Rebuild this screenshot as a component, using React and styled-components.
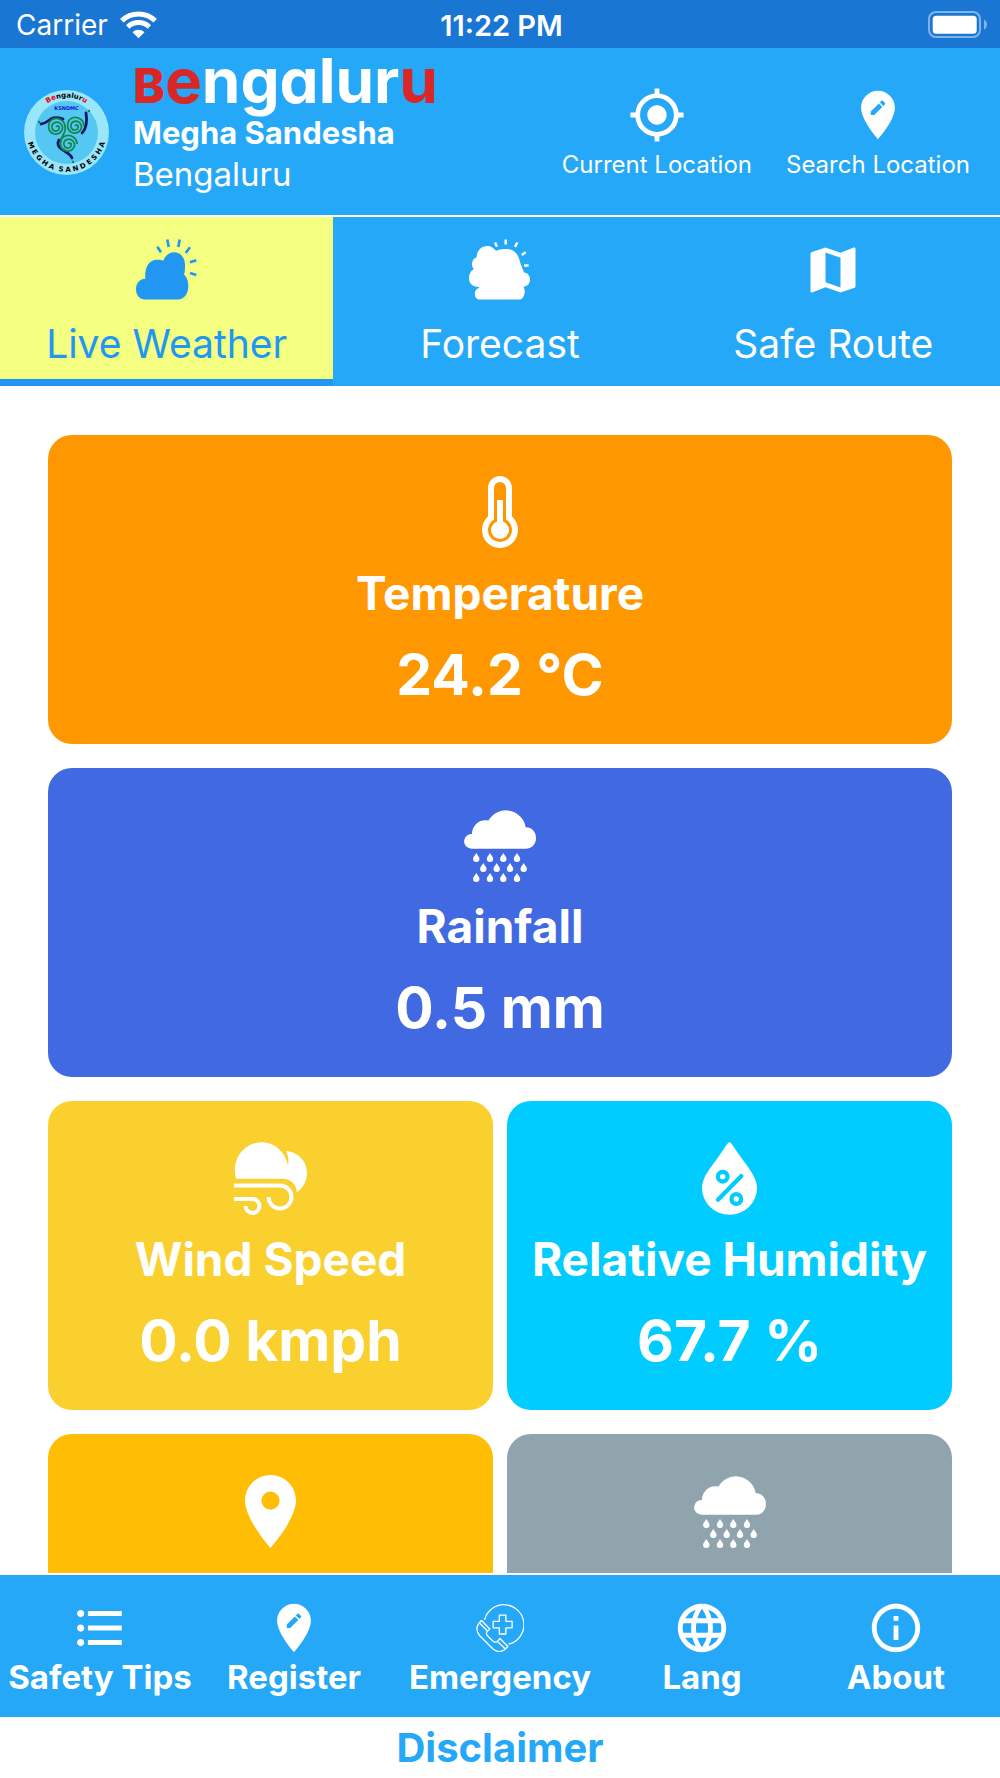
import React, { useState } from "react";
// styling
import styled, { createGlobalStyle } from "styled-components";
// icons
import {
  MdMyLocation,
  MdEditLocation,
  MdMap,
  MdFormatListBulleted,
  MdLanguage,
  MdInfoOutline,
} from "react-icons/md";

const LiveIcon = () => (
  <svg width="62" height="62" viewBox="0 0 62 62" fill="currentColor">
    <path d="M9 60.500C3.500 60.500 0 56 0 50S4 39.700 9.300 39.700C8.500 28 13 20.700 21 20.700C24 20.700 26 21 27.300 21.700C29.500 16.500 33 13.300 38 13.300C45 13.300 49 19 49 26C49 30 49 33 48 35.500C51 38.500 52.300 42 52.300 47C52.300 55 48 60.500 42 60.500Z" />
    <path
      d="M21.300 7.700L25 13.300M31.300 .5L32.700 8M43.700 .5L42.300 8M54 8.300L49.700 14M60.300 21.300L54 23.300M60.300 36L54 34"
      stroke="currentColor"
      strokeWidth="2.600"
    />
  </svg>
);

const ForecastIcon = () => (
  <svg width="62" height="62" viewBox="0 0 62 62" fill="currentColor">
    <path d="M9.500 60.500A5.500 6 0 0 1 10 49C10.500 48.500 10 48 9.500 48C3.500 48 0 44 0 39.500C0 35 2 31.500 5 30C2 28.500 2 20 7.500 18.500C8 11.500 12 7 18.500 7C22 7 25 9 27 12C29.500 10.500 33 10 37 10C45 10 49.500 15 51 23L55 33.500C59 34 61 37 61 40.500C61 45 58 47.500 54.500 47.500C57 52 55.500 59 51.500 60.500Z" />
    <path
      d="M26 3.500L28 7.700M36.700 .5V5.500M48.300 3.500L46 7.900M56.700 13.300L52.700 16M59.700 26.500H55"
      stroke="currentColor"
      strokeWidth="2.400"
    />
  </svg>
);

const TemperatureIcon = () => (
  <svg width="72" height="72" viewBox="0 0 72 72" fill="currentColor">
    <path
      fillRule="evenodd"
      d="M24 12a12 12 0 0 1 24 0v28.600A18 18 0 1 1 24 40.600zM30 12a6 6 0 0 1 12 0v31.600A12 12 0 1 1 30 43.600z"
    />
    <path d="M33 24h6v24h-6z" />
    <circle cx="36" cy="54" r="9" />
  </svg>
);

const drops = [
  [12.3, 44],
  [26, 44],
  [39.3, 44],
  [53, 44],
  [19.3, 54],
  [32.7, 54],
  [46, 54],
  [59.7, 54],
  [12.3, 64],
  [26, 64],
  [39.3, 64],
  [53, 64],
];

const RainIcon = () => (
  <svg width="72" height="73" viewBox="0 0 72 73" fill="currentColor">
    <path d="M7.500 39.700A7.500 7.500 0 0 1 0 32.300A7.500 7.500 0 0 1 8 25A13.500 13.500 0 0 1 24.500 11.500A20 20 0 0 1 61.700 18.300C68 18.300 72 23 72 29C72 35 68 39.700 62 39.700Z" />
    {drops.map(([x, y]) => (
      <path
        key={`${x}-${y}`}
        d={`M${x} ${y}c1 2.200 3.200 3.600 3.200 5.800a3.200 3.200 0 0 1-6.400 0c0-2.200 2.200-3.600 3.200-5.800z`}
      />
    ))}
  </svg>
);

const WindIcon = () => (
  <svg width="73" height="73" viewBox="0 0 73 73" fill="currentColor">
    <path d="M2 36.700C-3 17 10 .3 27.700 .3C40 .3 51 9 54 23.500C55 18 54 13 52 9C64 10 73 19 73 31C73 39 69 46 63 50.300C62 42 57 37 48.700 36.700Z" />
    <path
      d="M0 43.500H46A11.500 11.500 0 1 1 34.500 55M0 57H18.500A7 7 0 1 1 11.500 64"
      fill="none"
      stroke="currentColor"
      strokeWidth="4"
    />
  </svg>
);

const HumidityIcon = () => (
  <svg width="72" height="73" viewBox="0 0 72 73">
    <path
      fill="currentColor"
      d="M35.500 .3C37.500 .3 39.500 5 46 14C54 25.500 63 35 63 46A27.500 26.700 0 0 1 8 46C8 35 17 25.500 25 14C31.500 5 33.500 .3 35.500 .3Z"
    />
    <g fill="none" stroke="#00ccff" strokeWidth="4.300">
      <circle cx="28.700" cy="34.700" r="4.800" />
      <circle cx="42.300" cy="57" r="4.800" />
      <path d="M24 57.700L47.300 34" strokeLinecap="round" />
    </g>
  </svg>
);

const PlaceIcon = () => (
  <svg width="51" height="73" viewBox="5 2 14 20" fill="currentColor">
    <path
      fillRule="evenodd"
      d="M12 2C8.130 2 5 5.130 5 9c0 5.250 7 13 7 13s7-7.750 7-13c0-3.870-3.130-7-7-7zm0 9.500a2.500 2.500 0 0 1 0-5 2.500 2.500 0 0 1 0 5z"
    />
  </svg>
);

const EmergencyIcon = () => (
  <svg
    width="48"
    height="48"
    viewBox="0 0 48 48"
    fill="none"
    stroke="currentColor"
    strokeWidth="1.300"
    strokeLinejoin="round"
  >
    <path d="M8.500 16A20 20 0 1 1 32.500 40.200" />
    <path d="M23.300 11.200h6.600v6.200h6.200v6.400h-6.200v6.200h-6.600v-6.200h-6.200v-6.400h6.200z" />
    <path d="M5.500 16.500L13.800 25C10 28 9.500 29.500 11.500 31.800L17 37.300C19.500 39 21 38.500 24 34.500L31.800 42.500C27 48.500 22 49 17 45L3.500 31.500C-.5 26.500 0 21.500 5.500 16.500Z" />
    <path d="M3.500 19L11.500 27M21.500 37.500L29.500 45" />
  </svg>
);

const WifiIcon = () => (
  <svg width="37" height="28" viewBox="0 0 37 28" fill="none">
    <g stroke="currentColor" strokeWidth="5">
      <path d="M1.800 9.700A24 24 0 0 1 35.200 9.700" />
      <path d="M7.700 16A15.500 15.500 0 0 1 29.300 16" />
    </g>
    <path d="M12.500 21.200A8.500 8.500 0 0 1 24.500 21.200L18.500 27.300Z" fill="currentColor" />
  </svg>
);

const BatteryIcon = () => (
  <svg width="59" height="28" viewBox="0 0 59 28" fill="none">
    <rect x="1" y="1" width="51" height="25" rx="7" stroke="#fff" strokeOpacity=".45" strokeWidth="2" />
    <rect x="4.700" y="4.700" width="44" height="18" rx="3.500" fill="#fff" />
    <path d="M56 8.500C60 10 60 17 56 18.500Z" fill="#fff" fillOpacity=".45" />
  </svg>
);

const spiral =
  "M0 0C1 -2 4 -1 3 2C2 5 -3 5 -4 1C-5 -4 1 -7 5 -3C9 2 4 8 -2 7C-9 5 -9 -5 -3 -8C3 -10 9 -6 9 0";

const Emblem = () => (
  <svg width="85" height="85" viewBox="0 0 85 85">
    <defs>
      <path id="ringTop" d="M7.500 42.500A35 35 0 0 1 77.500 42.500" />
      <path id="ringBottom" d="M2.800 37A40 40 0 1 0 82.200 37" />
    </defs>
    <circle cx="42.500" cy="42.500" r="42.500" fill="#9ae6fb" />
    <circle cx="42.500" cy="42.500" r="31.500" fill="#55c7f3" />
    <EmblemText $size={7} textAnchor="middle">
      <textPath href="#ringTop" startOffset="50%">
        <tspan fill="#e00">Be</tspan>ngalur<tspan fill="#e00">u</tspan>
      </textPath>
    </EmblemText>
    <EmblemText $size={5} x="42.500" y="20" textAnchor="middle" fill="#1414d8">
      KSNDMC
    </EmblemText>
    <EmblemText $size={7} textAnchor="middle">
      <textPath href="#ringBottom" startOffset="50%">
        M E G H A &#160;S A N D E S H A
      </textPath>
    </EmblemText>
    <g fill="none" stroke="#12176e" strokeWidth="2.800" strokeLinecap="round">
      <path d="M17 34C25 34 25 24 39 29" />
      <path d="M62 23C63 29 63 38 58 43" />
      <path d="M35 50C30 60 45 60 48 68" />
    </g>
    <g fill="none" stroke="#12864a" strokeWidth="1.700">
      <path d={spiral} transform="translate(32 37)" />
      <path d={spiral} transform="translate(51 36)" />
      <path d={spiral} transform="translate(44 54)" />
      <path d="M41 36C43 43 37 45 36 53" />
    </g>
    <g fill="#12864a">
      <circle cx="15" cy="32" r="1.200" />
      <circle cx="65" cy="21" r="1.200" />
      <circle cx="49" cy="72" r="1.200" />
    </g>
  </svg>
);

const tabs = [
  { name: "Live Weather", icon: <LiveIcon /> },
  { name: "Forecast", icon: <ForecastIcon /> },
  { name: "Safe Route", icon: <MdMap size={60} /> },
];

const cards = [
  { name: "Temperature", value: "24.2 °C", color: "#ff9800", wide: true, icon: <TemperatureIcon /> },
  { name: "Rainfall", value: "0.5 mm", color: "#4169e1", wide: true, icon: <RainIcon /> },
  { name: "Wind Speed", value: "0.0 kmph", color: "#fad02e", icon: <WindIcon /> },
  { name: "Relative Humidity", value: "67.7 %", color: "#00ccff", icon: <HumidityIcon /> },
  { color: "#ffbd03", icon: <PlaceIcon /> },
  { color: "#90a4ae", icon: <RainIcon /> },
];

const links = [
  { name: "Safety Tips", icon: <MdFormatListBulleted size={58} /> },
  { name: "Register", icon: <MdEditLocation size={58} /> },
  { name: "Emergency", icon: <EmergencyIcon /> },
  { name: "Lang", icon: <MdLanguage size={58} /> },
  { name: "About", icon: <MdInfoOutline size={58} /> },
];

const App = () => {
  const [active, setActive] = useState("Live Weather");

  return (
    <Screen>
      <GlobalStyle />
      <StatusBar>
        <Carrier>
          Carrier <WifiIcon />
        </Carrier>
        <Clock>11:22 PM</Clock>
        <Battery>
          <BatteryIcon />
        </Battery>
      </StatusBar>
      <Header>
        <Emblem />
        <Brand>
          <Wordmark>
            <Red>
              <SmallCap>B</SmallCap>e
            </Red>
            ngalur<Red>u</Red>
          </Wordmark>
          <AppName>Megha Sandesha</AppName>
          <Place>Bengaluru</Place>
        </Brand>
        <Actions>
          <Action type="button">
            <MdMyLocation size={58} />
            Current Location
          </Action>
          <Action type="button">
            <MdEditLocation size={58} />
            Search Location
          </Action>
        </Actions>
      </Header>
      <Tabs>
        {tabs.map((tab) => (
          <Tab
            key={tab.name}
            type="button"
            $active={tab.name === active}
            onClick={() => setActive(tab.name)}
          >
            <TabIcon>{tab.icon}</TabIcon>
            {tab.name}
          </Tab>
        ))}
      </Tabs>
      <Content>
        {cards.map((card) => (
          <Card key={card.color} $color={card.color} $wide={card.wide}>
            <CardIcon>{card.icon}</CardIcon>
            {card.name && <h2>{card.name}</h2>}
            {card.value && <p>{card.value}</p>}
          </Card>
        ))}
      </Content>
      <BottomNav>
        {links.map((link) => (
          <NavLink key={link.name} href="#">
            <NavIcon>{link.icon}</NavIcon>
            {link.name}
          </NavLink>
        ))}
      </BottomNav>
      <Disclaimer href="#">Disclaimer</Disclaimer>
    </Screen>
  );
};

const GlobalStyle = createGlobalStyle`
  * {
    box-sizing: border-box;
    margin: 0;
    padding: 0;
  }
  body {
    background: white;
    font-family: Inter, "Liberation Sans", sans-serif;
  }
  svg {
    display: block;
    flex-shrink: 0;
  }
  button {
    border: none;
    background: none;
    color: inherit;
    font-family: inherit;
    cursor: pointer;
  }
  a {
    text-decoration: none;
  }
`;

const Screen = styled.div`
  display: flex;
  flex-direction: column;
  height: 100vh;
  color: white;
`;

const StatusBar = styled.div`
  display: grid;
  grid-template-columns: 1fr auto 1fr;
  align-items: center;
  height: 48px;
  padding: 2px 13px 0 16px;
  background: #1976d2;
  font-size: 28px;
`;

const Carrier = styled.div`
  display: flex;
  align-items: center;
  gap: 12px;
`;

const Clock = styled.div`
  font-size: 29px;
  font-weight: 600;
`;

const Battery = styled.div`
  display: flex;
  justify-content: flex-end;
`;

const Header = styled.header`
  display: flex;
  align-items: center;
  height: 169px;
  padding: 2px 30px 0 24px;
  background: #24a8f7;
  border-bottom: 2px solid white;
`;

const EmblemText = styled.text`
  font-family: "DejaVu Sans", sans-serif;
  font-size: ${(props) => props.$size}px;
  font-weight: bold;
`;

const Brand = styled.div`
  flex: 1;
  align-self: flex-start;
  padding-left: 24px;
`;

const Wordmark = styled.div`
  font-size: 62px;
  font-weight: 700;
  line-height: 62px;
  font-feature-settings: "cv11";
`;

const Red = styled.span`
  color: #d92626;
`;

const SmallCap = styled.span`
  font-size: 48px;
  font-weight: 800;
  line-height: 1;
`;

const AppName = styled.h1`
  font-size: 31px;
  font-weight: 700;
  line-height: 42px;
`;

const Place = styled.p`
  font-size: 33px;
  line-height: 40px;
`;

const Actions = styled.div`
  display: flex;
  gap: 34px;
`;

const Action = styled.button`
  display: flex;
  flex-direction: column;
  align-items: center;
  gap: 6px;
  font-size: 24px;
  line-height: 30px;
`;

const Tabs = styled.nav`
  display: grid;
  grid-template-columns: repeat(3, 1fr);
  background: #24a8f7;
`;

const Tab = styled.button`
  display: flex;
  flex-direction: column;
  align-items: center;
  gap: 17px;
  padding: 21px 0 10px;
  border-bottom: 7px solid ${(props) => (props.$active ? "#2196f3" : "transparent")};
  background: ${(props) => (props.$active ? "#f4ff81" : "transparent")};
  color: ${(props) => (props.$active ? "#2196f3" : "white")};
  font-size: 39px;
  line-height: 50px;
`;

const TabIcon = styled.span`
  display: flex;
  align-items: center;
  height: 64px;
`;

const Content = styled.main`
  flex: 1;
  min-height: 0;
  overflow-y: auto;
  scrollbar-width: none;
  display: grid;
  grid-template-columns: repeat(2, 1fr);
  align-content: start;
  gap: 24px 14px;
  padding: 49px 48px;
  border-bottom: 2px solid white;
`;

const Card = styled.section`
  grid-column: ${(props) => (props.$wide ? "1 / -1" : "auto")};
  height: 309px;
  padding-top: 41px;
  border-radius: 24px;
  background: ${(props) => props.$color};
  text-align: center;
  h2 {
    margin-top: 16px;
    font-size: 46px;
    font-weight: 700;
    line-height: 56px;
  }
  p {
    margin-top: 18px;
    font-size: 57px;
    font-weight: 700;
    line-height: 72px;
  }
`;

const CardIcon = styled.div`
  display: flex;
  justify-content: center;
  height: 73px;
`;

const BottomNav = styled.nav`
  display: grid;
  grid-template-columns: 50fr 47fr 56fr 45fr 52fr;
  padding: 24px 0 20px;
  background: #24a8f7;
`;

const NavLink = styled.a`
  display: flex;
  flex-direction: column;
  align-items: center;
  color: white;
  font-size: 33px;
  font-weight: 700;
  line-height: 40px;
`;

const NavIcon = styled.span`
  display: flex;
  align-items: center;
  height: 58px;
`;

const Disclaimer = styled.a`
  padding: 7px 0 6px;
  color: #24a8f7;
  font-size: 40px;
  font-weight: 700;
  line-height: 48px;
  text-align: center;
`;

export default App;
